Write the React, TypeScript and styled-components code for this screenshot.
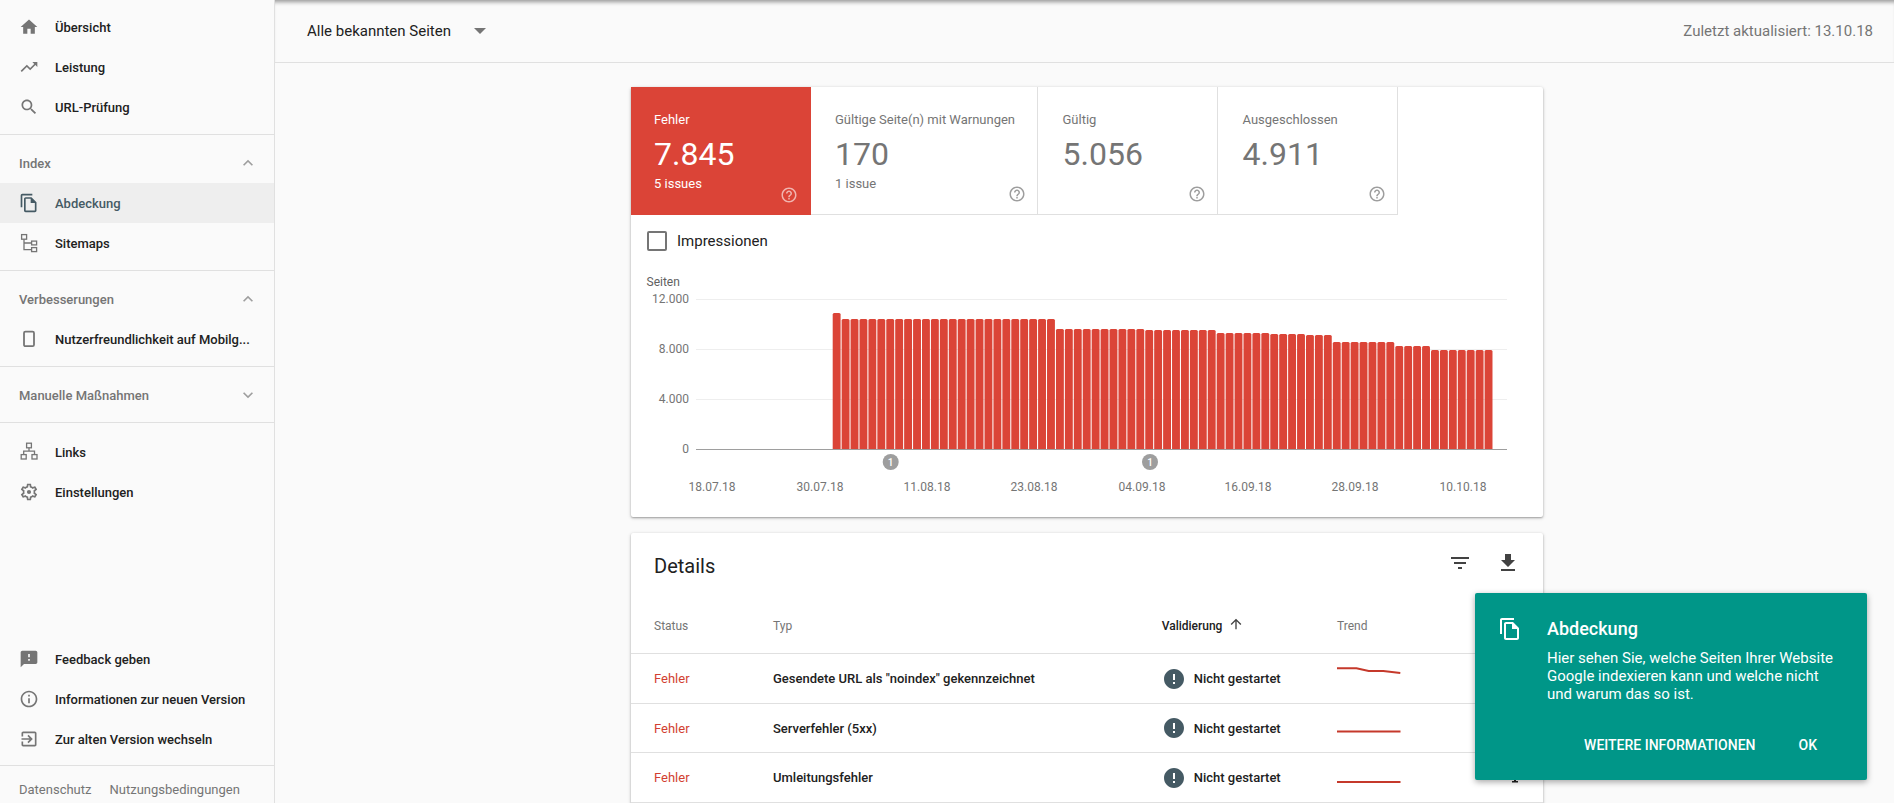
import React from "react";
import styled, { createGlobalStyle } from "styled-components";

const GlobalStyle = createGlobalStyle`
  html, body { margin: 0; padding: 0; height: 100%; overflow: hidden; background: #fafafa; }
  body { font-family: Roboto, "Liberation Sans", sans-serif; color: #212121; }
  * { box-sizing: border-box; }
`;

const P = {
  home: "M10 20v-6h4v6h5v-8h3L12 3 2 12h3v8z",
  trend: "M16 6l2.29 2.29-4.88 4.88-4-4L2 16.59 3.41 18l6-6 4 4 6.3-6.29L22 12V6z",
  search: "M15.5 14h-.79l-.28-.27C15.41 12.59 16 11.11 16 9.5 16 5.91 13.09 3 9.5 3S3 5.91 3 9.5 5.91 16 9.5 16c1.61 0 3.09-.59 4.23-1.57l.27.28v.79l5 4.99L20.49 19l-4.99-5zm-6 0C7.01 14 5 11.99 5 9.5S7.01 5 9.5 5 14 7.01 14 9.5 11.99 14 9.5 14z",
  copy: "M16 1H4c-1.1 0-2 .9-2 2v14h2V3h12V1zm-1 4H8c-1.1 0-1.99.9-1.99 2L6 21c0 1.1.89 2 1.99 2H19c1.1 0 2-.9 2-2V11l-6-6zM8 21V7h6v5h5v9H8z",
  settings: "M19.43 12.98c.04-.32.07-.64.07-.98s-.03-.66-.07-.98l2.11-1.65c.19-.15.24-.42.12-.64l-2-3.46c-.12-.22-.39-.3-.61-.22l-2.49 1c-.52-.4-1.08-.73-1.69-.98l-.38-2.65C14.46 2.18 14.25 2 14 2h-4c-.25 0-.46.18-.49.42l-.38 2.65c-.61.25-1.17.59-1.69.98l-2.49-1c-.23-.09-.49 0-.61.22l-2 3.46c-.13.22-.07.49.12.64l2.11 1.65c-.04.32-.07.65-.07.98s.03.66.07.98l-2.11 1.65c-.19.15-.24.42-.12.64l2 3.46c.12.22.39.3.61.22l2.49-1c.52.4 1.08.73 1.69.98l.38 2.65c.03.24.24.42.49.42h4c.25 0 .46-.18.49-.42l.38-2.65c.61-.25 1.17-.59 1.69-.98l2.49 1c.23.09.49 0 .61-.22l2-3.46c.12-.22.07-.49-.12-.64l-2.11-1.65zM17.45 11.27c.04.31.05.52.05.73 0 .21-.02.43-.05.73l-.14 1.13.89.7 1.08.84-.7 1.21-1.27-.51-1.04-.42-.9.68c-.43.32-.84.56-1.25.73l-1.06.43-.16 1.13-.2 1.35h-1.4l-.19-1.35-.16-1.13-1.06-.43c-.43-.18-.83-.41-1.23-.71l-.91-.7-1.06.43-1.27.51-.7-1.21 1.08-.84.89-.7-.14-1.13c-.03-.31-.05-.54-.05-.74s.02-.43.05-.73l.14-1.13-.89-.7-1.08-.84.7-1.21 1.27.51 1.04.42.9-.68c.43-.32.84-.56 1.25-.73l1.06-.43.16-1.13.2-1.35h1.39l.19 1.35.16 1.13 1.06.43c.43.18.83.41 1.23.71l.91.7 1.06-.43 1.27-.51.7 1.21-1.07.85-.89.7.14 1.13zM12 9.5a2.5 2.5 0 100 5 2.5 2.5 0 000-5z",
  feedback: "M20 2H4c-1.1 0-1.99.9-1.99 2L2 22l4-4h14c1.1 0 2-.9 2-2V4c0-1.1-.9-2-2-2zm-7 12h-2v-2h2v2zm0-4h-2V6h2v4z",
  info: "M11 7h2v2h-2zm0 4h2v6h-2zm1-9C6.48 2 2 6.48 2 12s4.48 10 10 10 10-4.48 10-10S17.52 2 12 2zm0 18c-4.41 0-8-3.59-8-8s3.59-8 8-8 8 3.59 8 8-3.59 8-8 8z",
  exit: "M10.09 15.59L11.5 17l5-5-5-5-1.41 1.41L12.67 11H3v2h9.67l-2.58 2.59zM19 3H5c-1.11 0-2 .9-2 2v4h2V5h14v14H5v-4H3v4c0 1.1.89 2 2 2h14c1.1 0 2-.9 2-2V5c0-1.1-.9-2-2-2z",
  help: "M11 18h2v-2h-2v2zm1-16C6.48 2 2 6.48 2 12s4.48 10 10 10 10-4.48 10-10S17.52 2 12 2zm0 18c-4.41 0-8-3.59-8-8s3.59-8 8-8 8 3.59 8 8-3.59 8-8 8zm0-14c-2.21 0-4 1.79-4 4h2c0-1.1.9-2 2-2s2 .9 2 2c0 2-3 1.75-3 5h2c0-2.25 3-2.5 3-5 0-2.21-1.79-4-4-4z",
  filter: "M10 18h4v-2h-4v2zM3 6v2h18V6H3zm3 7h12v-2H6v2z",
  download: "M19 9h-4V3H9v6H5l7 7 7-7zM5 18v2h14v-2H5z",
  up: "M4 12l1.41 1.41L11 7.83V20h2V7.83l5.58 5.59L20 12l-8-8-8 8z",
  less: "M12 8l-6 6 1.41 1.41L12 10.83l4.59 4.58L18 14z",
  more: "M16.59 8.59L12 13.17 7.41 8.59 6 10l6 6 6-6z",
  error: "M12 2C6.48 2 2 6.48 2 12s4.48 10 10 10 10-4.48 10-10S17.52 2 12 2zm1 15h-2v-2h2v2zm0-4h-2V7h2v6z",
  rowAction: "M12 8l-3 3h2v4H9v1.5h6V15h-2v-4h2z",
};

const Svg = styled.svg<{ $size: number; $color: string }>`
  width: ${(p) => p.$size}px;
  height: ${(p) => p.$size}px;
  flex: none;
  display: block;
  fill: ${(p) => p.$color};
`;

const Icon = ({ d, size = 20, color = "#757575" }: { d: string; size?: number; color?: string }) => (
  <Svg viewBox="0 0 24 24" $size={size} $color={color}>
    <path d={d} />
  </Svg>
);

const LineSvg = styled.svg<{ $weight?: number }>`
  width: 20px;
  height: 20px;
  flex: none;
  display: block;
  fill: none;
  stroke: #757575;
  stroke-width: ${(p) => p.$weight ?? 1.3};
`;

const SitemapIcon = () => (
  <LineSvg viewBox="0 0 20 20">
    <rect x="2.6" y="1.6" width="5" height="4.6" />
    <rect x="12.6" y="8.1" width="5" height="3.8" />
    <rect x="12.6" y="14.6" width="5" height="4" />
    <path d="M5 6.2V16.6H12.6M5 10H12.6" />
  </LineSvg>
);

const PhoneIcon = () => (
  <LineSvg viewBox="0 0 20 20" $weight={1.8}>
    <rect x="5" y="2.6" width="10" height="14.6" rx="1.4" />
  </LineSvg>
);

const LinksIcon = () => (
  <LineSvg viewBox="0 0 20 20">
    <rect x="7.6" y="1.2" width="4.8" height="4.6" />
    <rect x="2.2" y="12.6" width="5" height="4.4" />
    <rect x="13" y="12.6" width="5" height="4.4" />
    <path d="M10 5.8V9.2M4.7 12.6V9.2H15.5V12.6" />
  </LineSvg>
);

const Page = styled.div`
  width: 1894px;
  height: 803px;
  display: flex;
  overflow: hidden;
  position: relative;
  background: #fafafa;
`;

const Sidebar = styled.nav`
  width: 275px;
  flex: none;
  height: 100%;
  display: flex;
  flex-direction: column;
  border-right: 1px solid #e0e0e0;
  background: #fafafa;
`;

const NavGroup = styled.div<{ $first?: boolean; $last?: boolean }>`
  padding: ${(p) => (p.$first ? "7px" : "8px")} 0 ${(p) => (p.$last ? "6px" : "7px")};
  border-bottom: 1px solid #e0e0e0;
  ${(p) => p.$last && "margin-top: auto;"}
`;

const OpenGroup = styled.div`
  padding-top: 9px;
`;

const NavRow = styled.div<{ $active?: boolean }>`
  height: 40px;
  display: flex;
  align-items: center;
  gap: 16px;
  padding-left: 19px;
  font-size: 13px;
  font-weight: 500;
  color: ${(p) => (p.$active ? "#455a64" : "#212121")};
  background: ${(p) => (p.$active ? "#eeeeee" : "transparent")};
  white-space: nowrap;
`;

const GroupHead = styled.div`
  height: 40px;
  display: flex;
  align-items: center;
  justify-content: space-between;
  padding: 0 16px 0 19px;
  font-size: 13px;
  font-weight: 500;
  color: #757575;
`;

const SideFoot = styled.div`
  display: flex;
  gap: 18px;
  padding: 16px 0 5px 19px;
  font-size: 13px;
  line-height: 16px;
  color: #757575;
  white-space: nowrap;
`;

const Main = styled.main`
  flex: 1;
  min-width: 0;
  height: 100%;
  overflow: hidden;
`;

const TopBar = styled.header`
  height: 63px;
  display: flex;
  align-items: center;
  justify-content: space-between;
  padding: 0 21px 0 32px;
  border-bottom: 1px solid #e0e0e0;
  box-shadow: inset 0 5px 4px -3px rgba(0, 0, 0, 0.4);
`;

const Selector = styled.div`
  display: flex;
  align-items: center;
  gap: 23px;
  font-size: 15px;
  color: #212121;
`;

const Caret = styled.span`
  width: 0;
  height: 0;
  border-left: 6px solid transparent;
  border-right: 6px solid transparent;
  border-top: 6px solid #757575;
`;

const Updated = styled.div`
  font-size: 15px;
  color: #757575;
`;

const Content = styled.div`
  padding: 24px 0 0 356px;
  display: flex;
  flex-direction: column;
  gap: 16px;
`;

const Card = styled.section`
  width: 912px;
  flex: none;
  background: #fff;
  border-radius: 2px;
  box-shadow: 0 1px 2px rgba(0, 0, 0, 0.3), 0 1px 4px rgba(0, 0, 0, 0.14);
`;

const DetailsCard = styled(Card)`
  padding-bottom: 24px;
`;

const Tiles = styled.div`
  display: flex;
  height: 128px;
`;

const Tile = styled.div<{ $active?: boolean; $width: number; $inset: number }>`
  width: ${(p) => p.$width}px;
  display: grid;
  grid-template-columns: minmax(0, 1fr) 18px;
  padding: 25px ${(p) => (p.$active ? 13 : 11)}px 11px ${(p) => p.$inset}px;
  background: ${(p) => (p.$active ? "#db4437" : "#fff")};
  color: ${(p) => (p.$active ? "#fff" : "#757575")};
  border-right: ${(p) => (p.$active ? "none" : "1px solid #e0e0e0")};
  border-bottom: ${(p) => (p.$active ? "none" : "1px solid #e0e0e0")};
`;

const TileLabel = styled.div`
  font-size: 13px;
  line-height: 16px;
  white-space: nowrap;
`;

const TileValue = styled.div`
  font-size: 32px;
  line-height: 40px;
  margin-top: 6px;
`;

const TileSub = styled.div`
  font-size: 13px;
  line-height: 16px;
  margin-top: 2px;
`;

const TileHelp = styled.div`
  align-self: end;
`;

const CheckRow = styled.label`
  display: flex;
  align-items: center;
  gap: 10px;
  padding: 16px 0 0 16px;
  font-size: 15px;
  line-height: 20px;
  color: #212121;
`;

const CheckBox = styled.span`
  width: 20px;
  height: 20px;
  border: 2px solid #757575;
  border-radius: 2px;
  flex: none;
`;

const ChartSvg = styled.svg`
  display: block;
  width: 912px;
  height: 247px;
  margin-top: 19px;
  font-family: Roboto, "Liberation Sans", sans-serif;
  font-size: 12px;
`;

const TitleRow = styled.div`
  height: 65px;
  display: flex;
  align-items: center;
  justify-content: space-between;
  padding: 0 23px 0 23px;
`;

const Title = styled.h2`
  margin: 0;
  font-size: 20px;
  font-weight: 400;
  color: #212121;
`;

const Tools = styled.div`
  display: flex;
  gap: 24px;
  margin-bottom: 6px;
`;

const Row = styled.div<{ $h: number }>`
  display: grid;
  grid-template-columns: 119px 388.7px 175.3px 1fr;
  align-items: center;
  height: ${(p) => p.$h}px;
  padding: 0 16px 0 23px;
  border-bottom: 1px solid #e0e0e0;
  font-size: 13px;
  font-weight: 500;
  color: #212121;
  white-space: nowrap;
`;

const HeadCell = styled.div<{ $sorted?: boolean }>`
  font-size: 12px;
  font-weight: ${(p) => (p.$sorted ? 500 : 400)};
  color: ${(p) => (p.$sorted ? "#212121" : "#757575")};
  display: flex;
  align-items: center;
  gap: 6px;
  svg {
    margin-top: -3px;
  }
`;

const StatusCell = styled.div`
  color: #d23f31;
  font-weight: 400;
`;

const ValidCell = styled.div`
  display: flex;
  align-items: center;
  gap: 8px;
`;

const TrendCell = styled.div`
  display: flex;
  align-items: center;
  justify-content: space-between;
`;

const Spark = styled.svg`
  display: block;
  width: 64px;
  height: 24px;
  fill: none;
  stroke: #c5392b;
  stroke-width: 2;
`;

const Popup = styled.aside`
  position: absolute;
  left: 1475px;
  top: 593px;
  width: 392px;
  height: 187px;
  padding: 24px 0 0 23px;
  display: grid;
  grid-template-columns: 24px 1fr;
  align-content: start;
  column-gap: 25px;
  background: #009688;
  color: #fff;
  border-radius: 2px;
  box-shadow: 0 2px 6px rgba(0, 0, 0, 0.35);
`;

const PopupTitle = styled.div`
  font-size: 18px;
  font-weight: 500;
  line-height: 24px;
`;

const PopupBody = styled.div`
  margin-top: 8px;
  font-size: 15px;
  line-height: 18px;
  width: 300px;
`;

const PopupActions = styled.div`
  grid-column: 1 / 3;
  display: flex;
  justify-content: flex-end;
  gap: 43px;
  padding-right: 50px;
  margin-top: 24px;
  font-size: 14px;
  font-weight: 500;
  line-height: 36px;
`;

const heights = (i: number) => {
  if (i === 0) return 136;
  if (i < 25) return 130;
  if (i < 35) return 120;
  if (i < 43) return 119;
  if (i < 49) return 116;
  if (i < 53) return 115;
  if (i < 56) return 114;
  if (i < 63) return 107;
  if (i < 67) return 103;
  return 99;
};

const BARS = Array.from({ length: 74 }, (_, i) => heights(i));
const Y_TICKS: [string, number][] = [["12.000", 29], ["8.000", 79], ["4.000", 129], ["0", 179]];
const X_TICKS: [string, number][] = [
  ["18.07.18", 81], ["30.07.18", 189], ["11.08.18", 296], ["23.08.18", 403],
  ["04.09.18", 511], ["16.09.18", 617], ["28.09.18", 724], ["10.10.18", 832],
];

const Chart = () => (
  <ChartSvg viewBox="0 0 912 247">
    <text x="15.5" y="16" fill="#616161">Seiten</text>
    {Y_TICKS.map(([label, y]) => (
      <g key={label}>
        <text x="58" y={y + 4} textAnchor="end" fill="#757575">{label}</text>
        <line x1="65" x2="876" y1={y + 0.5} y2={y + 0.5} stroke={y === 179 ? "#9e9e9e" : "#eeeeee"} />
      </g>
    ))}
    {BARS.map((h, i) => {
      const x = 201.7 + i * 8.93;
      const top = 179 - h;
      return (
        <path
          key={i}
          fill="#db4437"
          d={`M${x} 179V${top + 1.5}q0-1.5 1.5-1.5h4.9q1.5 0 1.5 1.5V179z`}
        />
      );
    })}
    {[259.7, 519].map((x) => (
      <g key={x}>
        <circle cx={x} cy="192" r="8" fill="#9e9e9e" />
        <text x={x} y="195.5" textAnchor="middle" fill="#fff" fontSize="10" fontWeight="500">1</text>
      </g>
    ))}
    {X_TICKS.map(([label, x]) => (
      <text key={label} x={x} y="221" textAnchor="middle" fill="#757575">{label}</text>
    ))}
  </ChartSvg>
);

const TILES = [
  { label: "Fehler", value: "7.845", sub: "5 issues", width: 180, inset: 23, active: true },
  { label: "Gültige Seite(n) mit Warnungen", value: "170", sub: "1 issue", width: 226.5, inset: 24 },
  { label: "Gültig", value: "5.056", width: 180, inset: 25 },
  { label: "Ausgeschlossen", value: "4.911", width: 180, inset: 25 },
];

const ROWS = [
  { type: 'Gesendete URL als "noindex" gekennzeichnet', h: 50, line: "M0 1.3H19.5L31.7 4H46.3L63.3 6" },
  { type: "Serverfehler (5xx)", h: 49, line: "M0 15.5H63.5" },
  { type: "Umleitungsfehler", h: 50, line: "M0 16H63.5" },
];

export default function App() {
  return (
    <Page>
      <GlobalStyle />
      <Sidebar>
        <NavGroup $first>
          <NavRow><Icon d={P.home} />Übersicht</NavRow>
          <NavRow><Icon d={P.trend} />Leistung</NavRow>
          <NavRow><Icon d={P.search} />URL-Prüfung</NavRow>
        </NavGroup>
        <NavGroup>
          <GroupHead>Index<Icon d={P.less} color="#9e9e9e" /></GroupHead>
          <NavRow $active><Icon d={P.copy} color="#455a64" />Abdeckung</NavRow>
          <NavRow><SitemapIcon />Sitemaps</NavRow>
        </NavGroup>
        <NavGroup>
          <GroupHead>Verbesserungen<Icon d={P.less} color="#9e9e9e" /></GroupHead>
          <NavRow><PhoneIcon />Nutzerfreundlichkeit auf Mobilg...</NavRow>
        </NavGroup>
        <NavGroup>
          <GroupHead>Manuelle Maßnahmen<Icon d={P.more} color="#9e9e9e" /></GroupHead>
        </NavGroup>
        <OpenGroup>
          <NavRow><LinksIcon />Links</NavRow>
          <NavRow><Icon d={P.settings} />Einstellungen</NavRow>
        </OpenGroup>
        <NavGroup $last>
          <NavRow><Icon d={P.feedback} />Feedback geben</NavRow>
          <NavRow><Icon d={P.info} />Informationen zur neuen Version</NavRow>
          <NavRow><Icon d={P.exit} />Zur alten Version wechseln</NavRow>
        </NavGroup>
        <SideFoot>
          <span>Datenschutz</span>
          <span>Nutzungsbedingungen</span>
        </SideFoot>
      </Sidebar>
      <Main>
        <TopBar>
          <Selector>Alle bekannten Seiten<Caret /></Selector>
          <Updated>Zuletzt aktualisiert: 13.10.18</Updated>
        </TopBar>
        <Content>
          <Card>
            <Tiles>
              {TILES.map((t) => (
                <Tile key={t.label} $active={t.active} $width={t.width} $inset={t.inset}>
                  <div>
                    <TileLabel>{t.label}</TileLabel>
                    <TileValue>{t.value}</TileValue>
                    {t.sub && <TileSub>{t.sub}</TileSub>}
                  </div>
                  <TileHelp>
                    <Icon d={P.help} size={18} color={t.active ? "rgba(255,255,255,.6)" : "#9e9e9e"} />
                  </TileHelp>
                </Tile>
              ))}
            </Tiles>
            <CheckRow><CheckBox />Impressionen</CheckRow>
            <Chart />
          </Card>
          <DetailsCard>
            <TitleRow>
              <Title>Details</Title>
              <Tools>
                <Icon d={P.filter} size={24} color="#424242" />
                <Icon d={P.download} size={24} color="#424242" />
              </Tools>
            </TitleRow>
            <Row $h={56}>
              <HeadCell>Status</HeadCell>
              <HeadCell>Typ</HeadCell>
              <HeadCell $sorted>Validierung<Icon d={P.up} size={16} color="#424242" /></HeadCell>
              <HeadCell>Trend</HeadCell>
            </Row>
            {ROWS.map((r) => (
              <Row key={r.type} $h={r.h}>
                <StatusCell>Fehler</StatusCell>
                <div>{r.type}</div>
                <ValidCell><Icon d={P.error} size={24} color="#455a64" />Nicht gestartet</ValidCell>
                <TrendCell>
                  <Spark viewBox="0 0 64 24"><path d={r.line} /></Spark>
                  <Icon d={P.rowAction} size={24} color="#212121" />
                </TrendCell>
              </Row>
            ))}
          </DetailsCard>
        </Content>
      </Main>
      <Popup>
        <Icon d={P.copy} size={24} color="#fff" />
        <div>
          <PopupTitle>Abdeckung</PopupTitle>
          <PopupBody>
            Hier sehen Sie, welche Seiten Ihrer Website Google indexieren kann und welche nicht und warum das so ist.
          </PopupBody>
        </div>
        <PopupActions>
          <span>WEITERE INFORMATIONEN</span>
          <span>OK</span>
        </PopupActions>
      </Popup>
    </Page>
  );
}
